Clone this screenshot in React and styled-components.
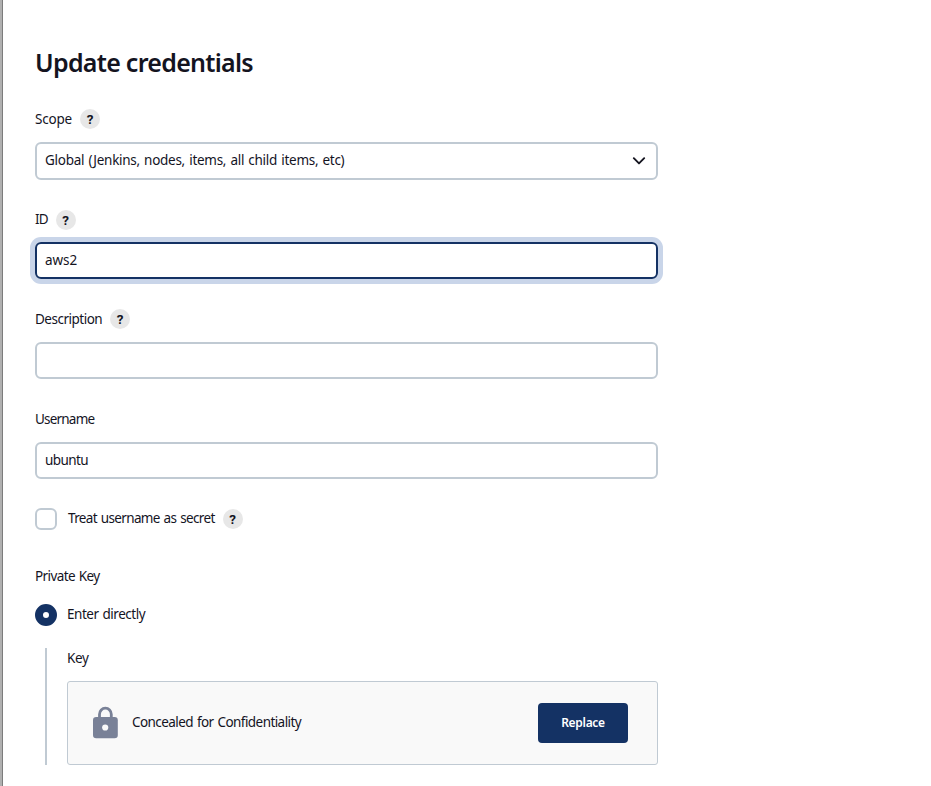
import React from "react";
import styled, { createGlobalStyle } from "styled-components";

const Global = createGlobalStyle`
  *, *::before, *::after { box-sizing: border-box; }
  body {
    margin: 0;
    background: #fff;
    color: #14141f;
    font-family: "Noto Sans", "Open Sans", sans-serif;
    font-size: 13.5px;
  }
`;

const Page = styled.main`
  min-height: 786px;
  height: 100vh;
  overflow: hidden;
  border-left: 2px solid #b0b0b0;
  box-shadow: inset 1px 0 0 #7c7c7c;
  padding: 43px 0 0 33px;
`;

const Form = styled.form`
  width: 623px;
`;

const Title = styled.h1`
  margin: 0 0 26px;
  height: 40px;
  line-height: 39px;
  font-size: 25px;
  font-weight: 600;
  white-space: nowrap;
  letter-spacing: ${(p) => p.$track || 0}px;
`;

const Text = styled.span`
  line-height: 20px;
  white-space: nowrap;
  word-spacing: 1px;
  letter-spacing: ${(p) => p.$track || 0}px;
  padding-bottom: ${(p) => (p.$raised ? 2 : 0)}px;
`;

const LabelRow = styled.div`
  display: flex;
  align-items: center;
  gap: 8px;
  height: 20px;
`;

const Help = styled.span`
  width: 20px;
  height: 20px;
  border-radius: 50%;
  background: #e7e7e7;
  display: flex;
  align-items: center;
  justify-content: center;
  margin-top: ${(p) => (p.$lowered ? 2 : 0)}px;
  font: 700 13.5px/20px Roboto, sans-serif;
`;

const Field = styled.div`
  height: 100px;
`;

const Control = styled.div`
  display: flex;
  align-items: center;
  justify-content: space-between;
  height: ${(p) => p.$height || 37}px;
  margin-top: 13px;
  padding: 0 10px 1px 8px;
  border: 2px solid ${(p) => (p.$focused ? "#143264" : "#c0cad3")};
  border-radius: 6px;
  box-shadow: ${(p) => (p.$focused ? "0 0 0 5px #c9d5e9" : "none")};
`;

const CheckRow = styled.div`
  display: flex;
  align-items: center;
  height: 22px;
  gap: 11px;
  margin-top: -1px;
`;

const Checkbox = styled.span`
  width: 22px;
  height: 22px;
  border: 2px solid #c0cad3;
  border-radius: 6px;
`;

const SectionLabel = styled.div`
  display: flex;
  height: 20px;
  margin: 36px 0 18px;
`;

const RadioRow = styled.div`
  display: flex;
  align-items: center;
  gap: 10px;
  height: 22px;
`;

const Radio = styled.span`
  width: 22px;
  height: 22px;
  border-radius: 50%;
  border: 8px solid #143264;
  background: #fff;
`;

const Nested = styled.div`
  margin: 22px 0 0 10px;
  padding-left: 20px;
  border-left: 2px solid #c0cad3;
  height: 117px;
`;

const Secret = styled.div`
  display: flex;
  align-items: center;
  height: 84px;
  margin-top: 13px;
  padding: 0 29px 0 25px;
  border: 1px solid #c0cad3;
  border-radius: 3px;
  background: #f9f9f9;
`;

const SecretText = styled(Text)`
  margin-left: 14px;
  flex: 1;
`;

const Button = styled.button`
  width: 90px;
  height: 40px;
  padding: 0;
  border: 0;
  border-radius: 4px;
  background: #143264;
  color: #fff;
  font: 600 12px/20px "Noto Sans", sans-serif;
  letter-spacing: ${(p) => p.$track || 0}px;
`;

const Chevron = () => (
  <svg width="14" height="10" viewBox="0 0 14 10" fill="none" stroke="#14141f" strokeWidth="1.9" strokeLinecap="round" strokeLinejoin="round">
    <path d="M1.8 2.2 7 7.4l5.2-5.2" />
  </svg>
);

const Lock = () => (
  <svg width="25" height="34" viewBox="0 0 25 34">
    <path d="M6.5 13V8.3a5.9 6.2 0 0 1 11.8 0V13" fill="none" stroke="#798197" strokeWidth="2.8" />
    <rect y="11" width="24.8" height="21.2" rx="3.2" fill="#798197" />
    <circle cx="12.2" cy="21.5" r="3.1" fill="#f9f9f9" />
  </svg>
);

const Label = ({ children, track, help, raised, lowered }) => (
  <LabelRow>
    <Text $track={track} $raised={raised}>{children}</Text>
    {help && <Help $lowered={lowered}>?</Help>}
  </LabelRow>
);

export default function App() {
  return (
    <>
      <Global />
      <Page>
        <Form>
          <Title $track={-0.72}>Update credentials</Title>
          <Field>
            <Label track={-0.2} help>Scope</Label>
            <Control $height={38}>
              <Text $track={-0.28} $raised>Global (Jenkins, nodes, items, all child items, etc)</Text>
              <Chevron />
            </Control>
          </Field>
          <Field>
            <Label track={-0.9} help lowered>ID</Label>
            <Control $focused><Text $track={-0.05}>aws2</Text></Control>
          </Field>
          <Field>
            <Label track={-0.5} help>Description</Label>
            <Control />
          </Field>
          <Field>
            <Label track={-0.8}>Username</Label>
            <Control><Text $track={-0.6}>ubuntu</Text></Control>
          </Field>
          <CheckRow>
            <Checkbox />
            <Label track={-0.65} help raised>Treat username as secret</Label>
          </CheckRow>
          <SectionLabel><Text $track={-0.6}>Private Key</Text></SectionLabel>
          <RadioRow>
            <Radio />
            <Text $track={-0.48} $raised>Enter directly</Text>
          </RadioRow>
          <Nested>
            <Label track={-0.4}>Key</Label>
            <Secret>
              <Lock />
              <SecretText $track={-0.57} $raised>Concealed for Confidentiality</SecretText>
              <Button type="button" $track={-0.3}>Replace</Button>
            </Secret>
          </Nested>
        </Form>
      </Page>
    </>
  );
}
